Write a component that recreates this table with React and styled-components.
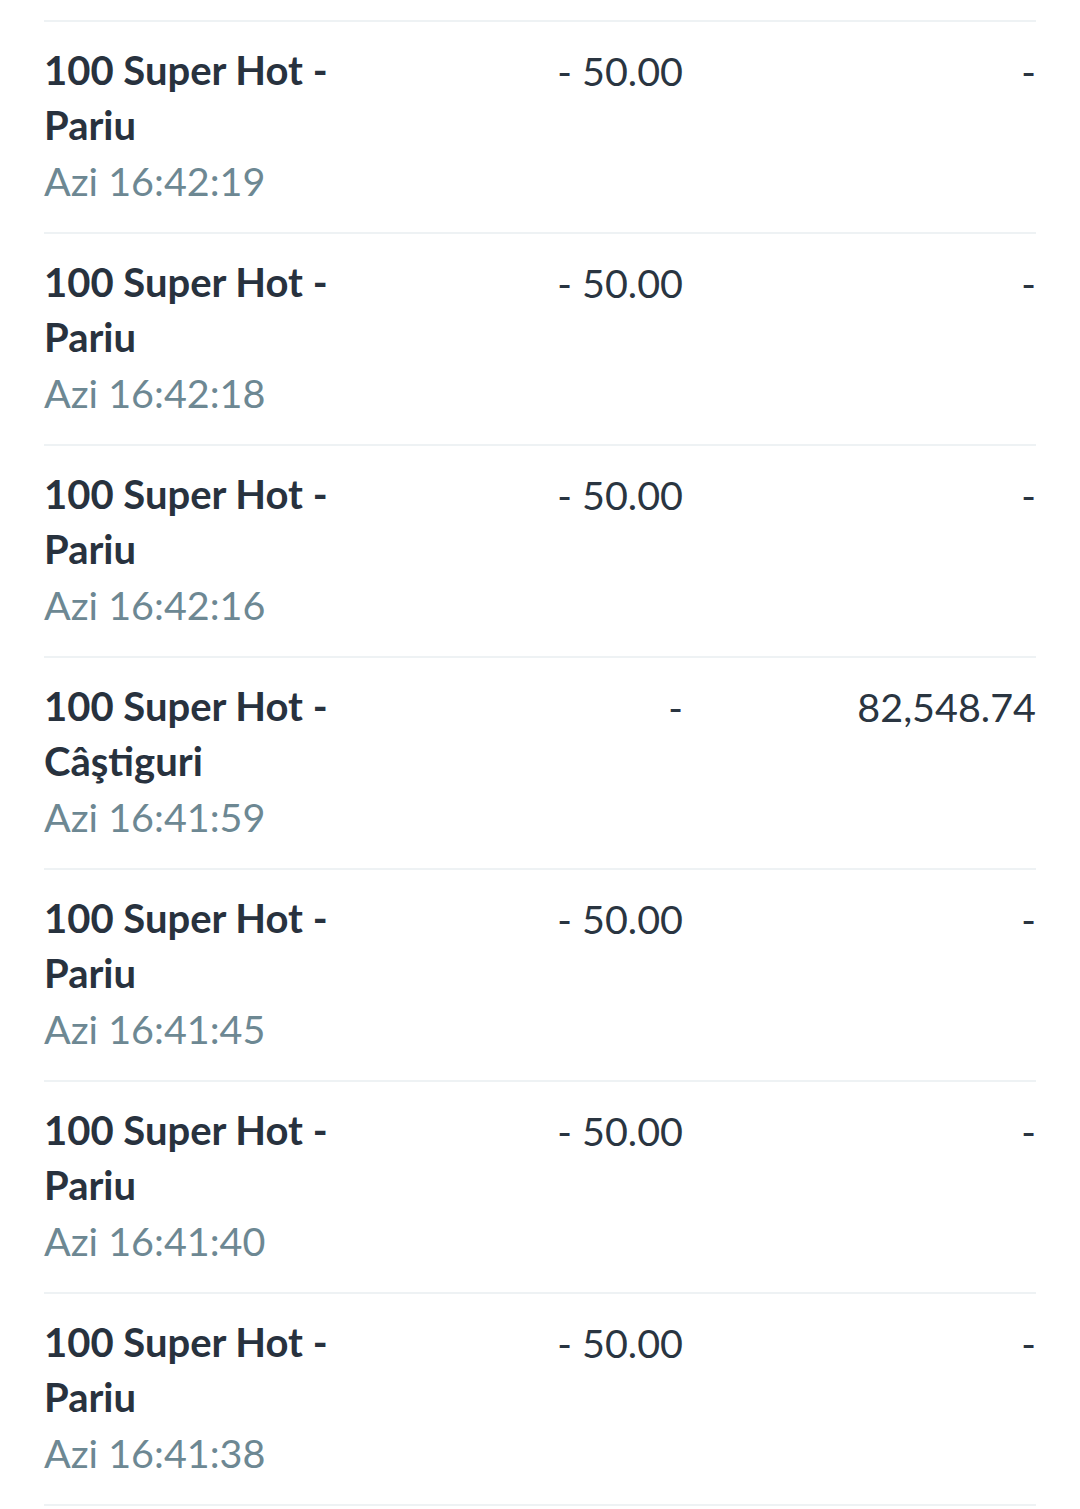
import styled, { createGlobalStyle } from "styled-components";

const GlobalStyle = createGlobalStyle`
  html, body {
    margin: 0;
    padding: 0;
    background: #ffffff;
  }
  body {
    font-family: Lato, "Open Sans", sans-serif;
  }
`;

const List = styled.div`
  padding: 20px 44px 0 44px;
`;

const Row = styled.div`
  display: grid;
  grid-template-columns: 340px 299px 1fr;
  border-top: 2px solid #eef2f4;
  padding: 21px 0 24px;
  &:last-child {
    border-bottom: 2px solid #eef2f4;
  }
`;

const Info = styled.div`
  display: flex;
  flex-direction: column;
`;

const Title = styled.div`
  font-size: 40px;
  line-height: 55px;
  font-weight: 700;
  color: #28323e;
`;

const Time = styled.div`
  font-size: 39.5px;
  line-height: 55px;
  color: #6d8893;
`;

const Amount = styled.div`
  font-size: 39.5px;
  line-height: 55px;
  color: #2a3541;
  text-align: right;
`;

const rows = [
  { title: "100 Super Hot - Pariu", time: "Azi 16:42:19", debit: "- 50.00", credit: "-" },
  { title: "100 Super Hot - Pariu", time: "Azi 16:42:18", debit: "- 50.00", credit: "-" },
  { title: "100 Super Hot - Pariu", time: "Azi 16:42:16", debit: "- 50.00", credit: "-" },
  { title: "100 Super Hot - Câştiguri", time: "Azi 16:41:59", debit: "-", credit: "82,548.74" },
  { title: "100 Super Hot - Pariu", time: "Azi 16:41:45", debit: "- 50.00", credit: "-" },
  { title: "100 Super Hot - Pariu", time: "Azi 16:41:40", debit: "- 50.00", credit: "-" },
  { title: "100 Super Hot - Pariu", time: "Azi 16:41:38", debit: "- 50.00", credit: "-" },
];

export default function App() {
  return (
    <>
      <GlobalStyle />
      <List>
        {rows.map((r, i) => (
          <Row key={i}>
            <Info>
              <Title>{r.title}</Title>
              <Time>{r.time}</Time>
            </Info>
            <Amount>{r.debit}</Amount>
            <Amount>{r.credit}</Amount>
          </Row>
        ))}
      </List>
    </>
  );
}
